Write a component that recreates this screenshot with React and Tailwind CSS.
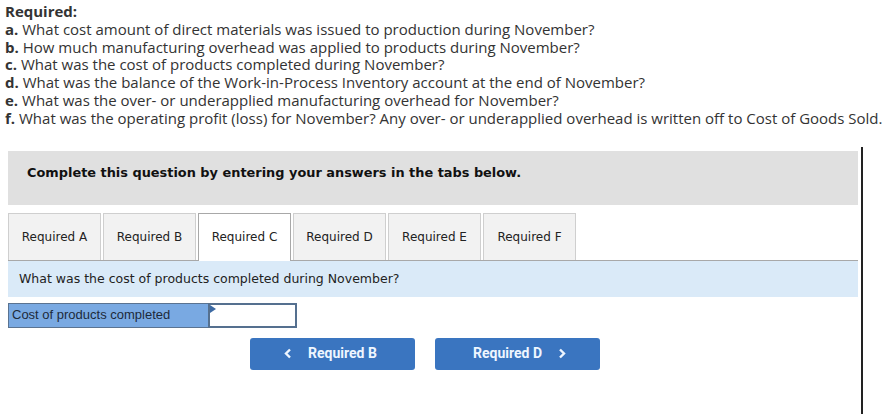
import React from "react";

const questions = [
  ["a.", "What cost amount of direct materials was issued to production during November?"],
  ["b.", "How much manufacturing overhead was applied to products during November?"],
  ["c.", "What was the cost of products completed during November?"],
  ["d.", "What was the balance of the Work-in-Process Inventory account at the end of November?"],
  ["e.", "What was the over- or underapplied manufacturing overhead for November?"],
  ["f.", "What was the operating profit (loss) for November? Any over- or underapplied overhead is written off to Cost of Goods Sold."],
];

const tabs = ["Required A", "Required B", "Required C", "Required D", "Required E", "Required F"];

const Chevron = ({ dir }) => (
  <svg width="8" height="11" viewBox="0 0 8 11" fill="none">
    <path
      d={dir === "left" ? "M6 1.5 L2 5.5 L6 9.5" : "M2 1.5 L6 5.5 L2 9.5"}
      stroke="currentColor"
      strokeWidth="2.4"
    />
  </svg>
);

const App = () => {
  return (
    <div className="relative w-[894px] h-[414px] bg-white overflow-hidden">
      {/* Required list */}
      <div className="pl-[5px] pt-[3px] text-[15px] leading-[17.8px] text-[#333] font-['Open_Sans',sans-serif]">
        <div className="font-bold h-[17.8px]">Required:</div>
        {questions.map(([letter, text]) => (
          <div key={letter} className="whitespace-nowrap h-[17.8px]">
            <span className="font-bold">{letter}</span> {text}
          </div>
        ))}
      </div>

      {/* Right border line */}
      <div className="absolute left-[861px] top-[147px] bottom-0 w-[1.5px] bg-[#222]" />

      <div className="mt-[23px] ml-[8px] w-[850px]">
        {/* Instruction box */}
        <div className="h-[54px] bg-[#e0e0e0] pt-[14px] pl-[19px] text-[12.9px] leading-[16px] font-bold text-[#111] font-['DejaVu_Sans',Verdana,sans-serif]">
          Complete this question by entering your answers in the tabs below.
        </div>

        {/* Tabs */}
        <div className="mt-[8px] flex gap-[2px] border-b border-[#a8a8a8] font-['DejaVu_Sans',Verdana,sans-serif] text-[12px] text-[#222]">
          {tabs.map((t) => (
            <div
              key={t}
              className={
                t === "Required C"
                  ? "w-[93px] h-[48px] -mb-px bg-white border border-b-0 border-[#a8a8a8] flex items-center justify-center"
                  : "w-[93px] h-[47px] bg-[#f2f2f2] border border-b-0 border-[#cfcfcf] flex items-center justify-center"
              }
            >
              {t}
            </div>
          ))}
        </div>

        {/* Question band */}
        <div className="h-[36px] bg-[#daeaf8] flex items-center pl-[11px] pt-px font-['DejaVu_Sans',Verdana,sans-serif] text-[12.5px] text-[#222]">
          What was the cost of products completed during November?
        </div>

        {/* Answer row */}
        <div className="mt-[6px] flex h-[25px]">
          <div className="w-[200px] bg-[#79a9e2] border border-r-0 border-[#5a7391] flex items-center pl-[3px] text-[13px] text-[#1d2a3a] font-['Liberation_Sans',Arial,sans-serif]">
            Cost of products completed
          </div>
          <div className="relative w-[89px] bg-white border-2 border-[#55708f]">
            <div className="absolute left-0 top-0 w-0 h-0 border-t-[4px] border-b-[4px] border-l-[6px] border-t-transparent border-b-transparent border-l-[#3d6aa3]" />
          </div>
        </div>

        {/* Nav buttons */}
        <div className="mt-[10px] flex gap-[20px] pl-[242px] font-['Roboto',sans-serif] text-[14px] font-bold text-[#eef6ff]">
          <button className="w-[165px] h-[32px] rounded-[3px] bg-[#3a75c0] flex items-center justify-center gap-[16px] pr-[4px]">
            <Chevron dir="left" />
            <span>Required B</span>
          </button>
          <button className="w-[165px] h-[32px] rounded-[3px] bg-[#3a75c0] flex items-center justify-center gap-[16px] pl-[4px]">
            <span>Required D</span>
            <Chevron dir="right" />
          </button>
        </div>
      </div>
    </div>
  );
};

export default App;
